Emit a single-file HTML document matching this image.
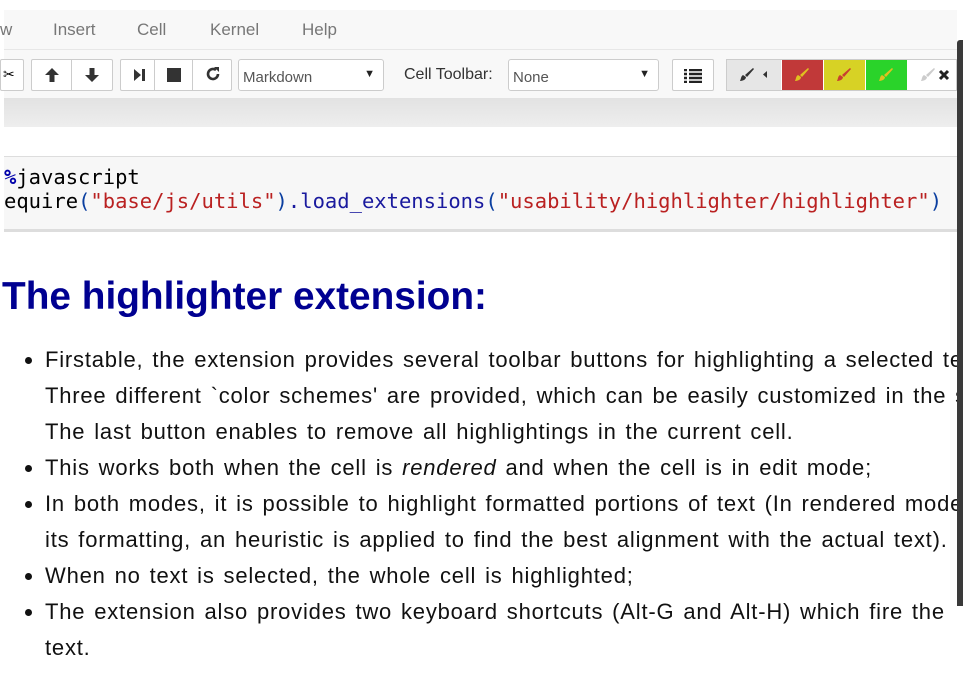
<!DOCTYPE html>
<html><head><style>
*{margin:0;padding:0;box-sizing:border-box}
body{width:963px;height:674px;overflow:hidden;background:#fff;position:relative;font-family:"Liberation Sans",sans-serif}
.menu{position:absolute;left:4px;top:10px;width:953px;height:40px;background:#f8f8f8;border-bottom:1px solid #e7e7e7}
.menu span{position:absolute;top:10px;font-size:17px;color:#777}
.tb{position:absolute;left:4px;top:50px;width:953px;height:48px;background:#f8f8f8}
.btn{position:absolute;top:9px;height:32px;border:1px solid #ccc;background:#fff;border-radius:2px}
.btn i{position:absolute;top:0;height:30px;border-right:1px solid #ccc}
.sel{position:absolute;top:9px;height:32px;border:1px solid #ccc;background:#fff;border-radius:3px;font-size:15px;color:#555;padding:9px 4px}
.sel b{position:absolute;right:8px;top:8px;font-size:11px;color:#222}
.band{position:absolute;left:4px;top:98px;width:953px;height:29px;background:linear-gradient(#e2e2e2,#eeeeee)}
.code{position:absolute;left:4px;top:156px;width:953px;height:74px;background:#f7f7f7;border-top:1px solid #ddd;border-bottom:1px solid #ddd;font-family:"DejaVu Sans Mono","Liberation Mono",monospace;font-size:20.5px;line-height:24px;padding-top:8px;color:#000;white-space:nowrap;overflow:hidden}
.line2{position:absolute;left:4px;top:230px;width:953px;height:2px;background:#ddd}
h1{position:absolute;left:2px;top:275px;font-size:38.8px;color:#000091;font-weight:bold;white-space:nowrap}
.txt{position:absolute;left:0;top:342px;width:957px;overflow:hidden;font-size:22px;line-height:36px;color:#111;white-space:nowrap;letter-spacing:0.8px;word-spacing:2px}
.txt div{padding-left:45px;position:relative}
.txt .b:before{content:"";position:absolute;left:25px;top:15px;width:7px;height:7px;border-radius:50%;background:#111}
.sb{position:absolute;left:957px;top:40px;width:6px;height:566px;background:#3a3a3a;border-radius:3px 0 0 0}
</style></head><body>
<div class="menu">
<span style="left:-4px">w</span><span style="left:49px">Insert</span><span style="left:133px">Cell</span><span style="left:206px">Kernel</span><span style="left:298px">Help</span>
</div>
<div class="tb">
<div class="btn" style="left:-4px;width:24px"><span style="position:absolute;left:2px;top:6px;font-size:14px">&#9986;</span></div>
<div class="btn" style="left:27px;width:82px"><i style="left:0;width:40px"></i>
<svg style="position:absolute;left:12px;top:7px" width="16" height="16" viewBox="0 0 16 16"><path d="M8 1L1 8h4.5v7h5V8H15z" fill="#333"/></svg>
<svg style="position:absolute;left:52px;top:7px" width="16" height="16" viewBox="0 0 16 16"><path d="M8 15L1 8h4.5V1h5v7H15z" fill="#333"/></svg></div>
<div class="btn" style="left:116px;width:112px"><i style="left:0;width:34px"></i><i style="left:34px;width:38px"></i>
<svg style="position:absolute;left:11px;top:7px" width="14" height="16" viewBox="0 0 14 16"><path d="M2 2l7 6-7 6z M10 2h3v12h-3z" fill="#333"/></svg>
<svg style="position:absolute;left:45px;top:7px" width="16" height="16"><rect x="1" y="1" width="14" height="14" fill="#333"/></svg>
<svg style="position:absolute;left:84px;top:6px" width="16" height="16" viewBox="0 0 16 16"><path d="M13 8a5 5 0 1 1-2-4" fill="none" stroke="#333" stroke-width="2.6"/><path d="M9 1h5v5z" fill="#333"/></svg></div>
<div class="sel" style="left:234px;width:146px">Markdown<b>&#9660;</b></div>
<span style="position:absolute;left:400px;top:16px;font-size:16px;color:#333">Cell Toolbar:</span>
<div class="sel" style="left:504px;width:151px">None<b>&#9660;</b></div>
<div class="btn" style="left:668px;width:42px"><svg style="position:absolute;left:11px;top:9px" width="18" height="14"><path d="M0 1h3M5 1h13M0 5h3M5 5h13M0 9h3M5 9h13M0 13h3M5 13h13" stroke="#222" stroke-width="2.4"/></svg></div>
<div style="position:absolute;left:722px;top:9px;width:231px;height:32px;border:1px solid #ccc;background:#fff">
<div style="position:absolute;left:0;top:0;width:54px;height:30px;background:#e6e6e6"><svg style="position:absolute;left:12px;top:7px" width="36" height="16"><path d="M1 14c2 0 6-1 6-4l-3-2c-2 1-2 4-3 6zM6 8l8-7 1 1-7 8z" fill="#333"/><path d="M28 4v7l-4-3.5z" fill="#333"/></svg></div>
<div style="position:absolute;left:55px;top:0;width:41px;height:30px;background:#c13939"><svg style="position:absolute;left:12px;top:7px" width="18" height="16"><path d="M1 14c2 0 6-1 6-4l-3-2c-2 1-2 4-3 6zM6 8l8-7 1 1-7 8z" fill="#e0c020"/></svg></div>
<div style="position:absolute;left:97px;top:0;width:41px;height:30px;background:#d7d225"><svg style="position:absolute;left:12px;top:7px" width="18" height="16"><path d="M1 14c2 0 6-1 6-4l-3-2c-2 1-2 4-3 6zM6 8l8-7 1 1-7 8z" fill="#c84030"/></svg></div>
<div style="position:absolute;left:139px;top:0;width:41px;height:30px;background:#2ad32a"><svg style="position:absolute;left:12px;top:7px" width="18" height="16"><path d="M1 14c2 0 6-1 6-4l-3-2c-2 1-2 4-3 6zM6 8l8-7 1 1-7 8z" fill="#e0c020"/></svg></div>
<svg style="position:absolute;left:193px;top:7px" width="36" height="16"><path d="M1 14c2 0 6-1 6-4l-3-2c-2 1-2 4-3 6zM6 8l8-7 1 1-7 8z" fill="#ccc"/><path d="M20 4l8 8M28 4l-8 8" stroke="#222" stroke-width="3"/></svg>
</div>
</div>
<div class="band"></div>
<div class="code"><div><span style="color:#0000aa;font-weight:bold">%</span>javascript</div><div>equire<span style="color:#0b3fa0">(</span><span style="color:#ba2121">"base/js/utils"</span><span style="color:#0b3fa0">)</span><span style="color:#1a1a9e">.load_extensions</span><span style="color:#0b3fa0">(</span><span style="color:#ba2121">"usability/highlighter/highlighter"</span><span style="color:#0b3fa0">)</span></div></div>
<div class="line2"></div>
<h1>The highlighter extension:</h1>
<div class="txt">
<div class="b">Firstable, the extension provides several toolbar buttons for highlighting a selected text.</div>
<div>Three different `color schemes' are provided, which can be easily customized in the stylesheet.</div>
<div>The last button enables to remove all highlightings in the current cell.</div>
<div class="b">This works both when the cell is <i>rendered</i> and when the cell is in edit mode;</div>
<div class="b">In both modes, it is possible to highlight formatted portions of text (In rendered mode,</div>
<div>its formatting, an heuristic is applied to find the best alignment with the actual text).</div>
<div class="b">When no text is selected, the whole cell is highlighted;</div>
<div class="b">The extension also provides two keyboard shortcuts (Alt-G and Alt-H) which fire the</div>
<div>text.</div>
</div>
<div class="sb"></div>
</body></html>
